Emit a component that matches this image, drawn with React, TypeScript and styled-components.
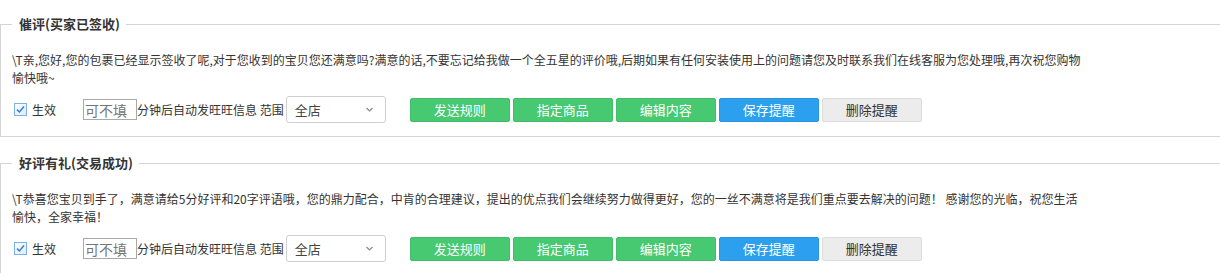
import React from 'react'
import styled, { createGlobalStyle } from 'styled-components'

const GlobalStyle = createGlobalStyle`
  html, body {
    margin: 0;
    padding: 0;
    background: #fff;
    overflow: hidden;
  }
  body {
    font-family: 'Noto Sans CJK SC', 'Liberation Sans', sans-serif;
    color: #333;
  }
`

const Page = styled.div`
  padding-top: 15px;
`

const Group = styled.fieldset`
  margin: 0 0 17px 0;
  padding: 18px 0 13px 11px;
  border: 1px solid #d4d4d4;
  border-right: none;
  min-width: 0;
`

const Legend = styled.legend`
  padding: 0 6px 0 7px;
  font-size: 13px;
  font-weight: bold;
  line-height: 18px;
  color: #333;
`

const Message = styled.p`
  margin: 0;
  width: 1076px;
  font-size: 12px;
  line-height: 18px;
  color: #333;
`

const Controls = styled.div`
  display: flex;
  align-items: center;
  height: 27px;
  margin-top: 9px;
`

const Check = styled.label`
  display: flex;
  align-items: center;
  margin-left: 2px;
  font-size: 12px;
  color: #333;
  gap: 5px;
`

const MinutesInput = styled.input`
  box-sizing: border-box;
  width: 54px;
  height: 21px;
  margin: 0 0 0 27px;
  padding: 0 1px;
  border: 1px solid #a9a9a9;
  border-radius: 0;
  font-family: 'Noto Sans CJK SC', sans-serif;
  font-size: 14px;
  color: #333;
  outline: none;
  &::placeholder {
    color: #767676;
  }
`

const Hint = styled.span`
  font-size: 12px;
  margin-right: 2px;
  white-space: nowrap;
`

const SelectBox = styled.div`
  box-sizing: border-box;
  width: 100px;
  height: 27px;
  padding: 0 12px 0 8px;
  display: flex;
  align-items: center;
  justify-content: space-between;
  border: 1px solid #cfcfcf;
  border-radius: 3px;
  font-size: 13px;
  color: #444;
`

const Actions = styled.div`
  display: flex;
  gap: 3px;
  margin-left: 24px;
`

const palette = {
  green: { bg: '#46c971', border: '#3fbd67', fg: '#fff' },
  blue: { bg: '#2c9fee', border: '#2796e2', fg: '#fff' },
  gray: { bg: '#ececec', border: '#dcdcdc', fg: '#333' },
}

const ActionButton = styled.button<{ $tone: keyof typeof palette }>`
  box-sizing: border-box;
  width: 100px;
  height: 24px;
  padding: 0;
  border: 1px solid ${p => palette[p.$tone].border};
  border-radius: 2px;
  background: ${p => palette[p.$tone].bg};
  color: ${p => palette[p.$tone].fg};
  font-family: 'Noto Sans CJK SC', sans-serif;
  font-size: 13px;
  line-height: 22px;
  cursor: pointer;
`

const CheckIcon = () => (
  <svg width="13" height="13" viewBox="0 0 13 13">
    <defs>
      <linearGradient id="cbg" x1="0" y1="0" x2="1" y2="1">
        <stop offset="0" stopColor="#ffffff" />
        <stop offset="1" stopColor="#dbeafa" />
      </linearGradient>
    </defs>
    <rect x="0.5" y="0.5" width="12" height="12" fill="url(#cbg)" stroke="#7ab2e4" />
    <path d="M3 6.6 L5.4 9 L10 3.6" fill="none" stroke="#3b7cc6" strokeWidth="1.5" />
  </svg>
)

const Chevron = () => (
  <svg width="7" height="5" viewBox="0 0 7 5">
    <path d="M0.5 1 L3.5 4 L6.5 1" fill="none" stroke="#888" strokeWidth="1.2" />
  </svg>
)

interface Reminder {
  title: string
  text: string
}

const reminders: Reminder[] = [
  {
    title: '催评(买家已签收)',
    text: '\\T亲,您好,您的包裹已经显示签收了呢,对于您收到的宝贝您还满意吗?满意的话,不要忘记给我做一个全五星的评价哦,后期如果有任何安装使用上的问题请您及时联系我们在线客服为您处理哦,再次祝您购物愉快哦~',
  },
  {
    title: '好评有礼(交易成功)',
    text: '\\T恭喜您宝贝到手了，满意请给5分好评和20字评语哦，您的鼎力配合，中肯的合理建议，提出的优点我们会继续努力做得更好，您的一丝不满意将是我们重点要去解决的问题！ 感谢您的光临，祝您生活愉快，全家幸福！',
  },
]

function ReminderGroup({ title, text }: Reminder) {
  return (
    <Group>
      <Legend>{title}</Legend>
      <Message>{text}</Message>
      <Controls>
        <Check>
          <CheckIcon />
          生效
        </Check>
        <MinutesInput placeholder="可不填" />
        <Hint>分钟后自动发旺旺信息 范围</Hint>
        <SelectBox>
          全店
          <Chevron />
        </SelectBox>
        <Actions>
          <ActionButton $tone="green">发送规则</ActionButton>
          <ActionButton $tone="green">指定商品</ActionButton>
          <ActionButton $tone="green">编辑内容</ActionButton>
          <ActionButton $tone="blue">保存提醒</ActionButton>
          <ActionButton $tone="gray">删除提醒</ActionButton>
        </Actions>
      </Controls>
    </Group>
  )
}

export default function App() {
  return (
    <Page>
      <GlobalStyle />
      {reminders.map(r => (
        <ReminderGroup key={r.title} {...r} />
      ))}
    </Page>
  )
}
